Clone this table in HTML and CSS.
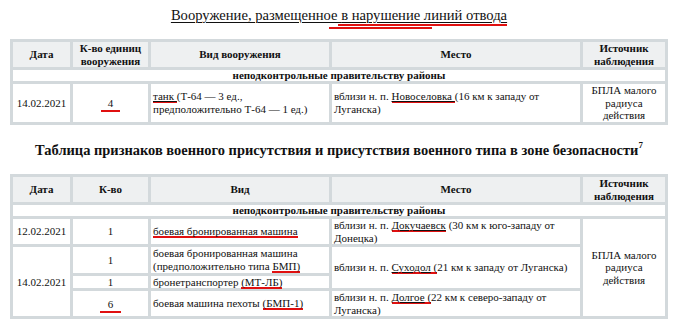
FILE: index.html
```html
<!DOCTYPE html>
<html lang="ru">
<head>
<meta charset="utf-8">
<link rel="stylesheet" href="styles.css">
</head>
<body>
<div class="page">
  <h1 class="title"><span class="uline">Вооружение, размещенное <span class="title-mark">в нарушение линий отвода</span></span></h1>

  <table class="doc">
    <colgroup>
      <col class="c-date"><col class="c-qty"><col class="c-kind"><col class="c-place"><col class="c-src">
    </colgroup>
    <tr class="head">
      <th>Дата</th>
      <th>К-во единиц<br>вооружения</th>
      <th>Вид вооружения</th>
      <th>Место</th>
      <th>Источник<br>наблюдения</th>
    </tr>
    <tr class="sub"><td colspan="5">неподконтрольные правительству районы</td></tr>
    <tr>
      <td class="ctr">14.02.2021</td>
      <td class="ctr"><span class="num-mark">4</span></td>
      <td><span class="ul red">танк </span>(Т-64 — 3 ед.,<br>предположительно Т-64 — 1 ед.)</td>
      <td>вблизи н. п. <span class="ul red">Новоселовка </span>(16 км к западу от<br>Луганска)</td>
      <td class="ctr">БПЛА малого<br>радиуса<br>действия</td>
    </tr>
  </table>

  <h2 class="title2">Таблица признаков военного присутствия и присутствия военного типа в зоне безопасности<sup>7</sup></h2>

  <table class="doc">
    <colgroup>
      <col class="c-date"><col class="c-qty"><col class="c-kind"><col class="c-place"><col class="c-src">
    </colgroup>
    <tr class="head">
      <th>Дата</th>
      <th>К-во</th>
      <th>Вид</th>
      <th>Место</th>
      <th>Источник<br>наблюдения</th>
    </tr>
    <tr class="sub"><td colspan="5">неподконтрольные правительству районы</td></tr>
    <tr>
      <td class="ctr">12.02.2021</td>
      <td class="ctr">1</td>
      <td><span class="red">боевая бронированная машина</span></td>
      <td>вблизи н. п. <span class="ul red">Докучаевск</span> (30 км к юго-западу от<br>Донецка)</td>
      <td class="ctr" rowspan="4">БПЛА малого<br>радиуса<br>действия</td>
    </tr>
    <tr>
      <td class="ctr" rowspan="3">14.02.2021</td>
      <td class="ctr">1</td>
      <td>боевая бронированная машина<br>(предположительно типа <span class="red">БМП)</span></td>
      <td rowspan="2">вблизи н. п. <span class="red"><span class="ul">Суходол</span> (</span>21 км к западу от Луганска)</td>
    </tr>
    <tr>
      <td class="ctr">1</td>
      <td>бронетранспортер <span class="red">(МТ-ЛБ)</span></td>
    </tr>
    <tr>
      <td class="ctr"><span class="num-mark wide">6</span></td>
      <td>боевая машина пехоты <span class="red">(БМП-1)</span></td>
      <td>вблизи н. п. <span class="red"><span class="ul">Долгое</span> (</span>22 км к северо-западу от<br>Луганска)</td>
    </tr>
  </table>
</div>
</body>
</html>
```

FILE: styles.css
```css
html, body {
  margin: 0;
  padding: 0;
  background: #ffffff;
  font-family: "Liberation Serif", serif;
}

.page {
  padding: 5px 12px 0 10px;
  color: #111;
}

.title {
  margin: 0 0 13px 0;
  font-size: 14.6px;
  font-weight: normal;
  line-height: 21px;
  text-align: center;
}

.uline {
  text-decoration: underline;
  text-decoration-thickness: 1px;
  text-underline-offset: 2px;
}

.title-mark {
  position: relative;
}

.title-mark::before {
  content: "";
  position: absolute;
  left: -3px;
  right: 0;
  bottom: -3px;
  height: 2px;
  background: #e01010;
}

.title-mark::after {
  content: "";
  position: absolute;
  left: -12px;
  width: 103px;
  bottom: -6px;
  height: 2px;
  background: #e01010;
}

.doc {
  width: 658px;
  border-collapse: separate;
  border-spacing: 3px;
  background: #d3d9dc;
  font-size: 11px;
  line-height: 12.6px;
  table-layout: fixed;
}

.c-date { width: 57px; }
.c-qty { width: 75px; }
.c-kind { width: 178px; }
.c-place { width: 248px; }
.c-src { width: 82px; }

.doc th,
.doc td {
  padding: 0 2px;
  vertical-align: middle;
  background: #ffffff;
}

.doc th {
  background: #eef0f1;
  font-weight: bold;
  text-align: center;
}

.doc .sub td {
  font-weight: bold;
  text-align: center;
  line-height: 11px;
}

.ctr {
  text-align: center;
}

.ul {
  text-decoration: underline;
  text-decoration-thickness: 1px;
}

.red {
  background: linear-gradient(#e01010, #e01010) no-repeat left bottom / 100% 2px;
  padding-bottom: 1px;
}

.num-mark {
  display: inline-block;
  padding: 0 7px 1px 7px;
  border-bottom: 2px solid #e01010;
  line-height: 12px;
  margin-top: 3px;
}

.num-mark.wide {
  padding: 0 8px 1px 8px;
}

.title2 {
  margin: 15px 0 14px 0;
  font-size: 14.45px;
  font-weight: bold;
  line-height: 20px;
  text-align: center;
  white-space: nowrap;
}

.title2 sup {
  font-size: 9px;
  line-height: 0;
  vertical-align: 7px;
}
```
